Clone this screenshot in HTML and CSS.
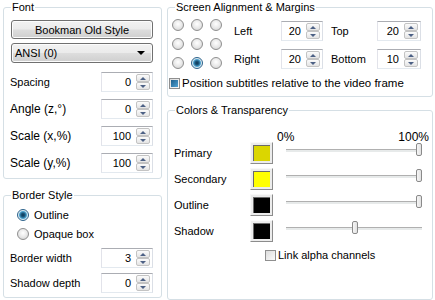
FILE: index.html
```html
<!DOCTYPE html>
<html lang="en">
<head>
    <meta charset="UTF-8">
    <title>Subtitle Style</title>
    <link rel="stylesheet" href="styles.css">
</head>
<body>
    <div class="dialog">
        <div class="col col-left">
            <fieldset class="group group-font">
                <legend>Font</legend>
                <div class="group-body">
                    <button class="btn-face" type="button">Bookman Old Style</button>
                    <div class="combo"><span>ANSI (0)</span><span class="combo-arrow"></span></div>
                    <div class="field-list">
                        <div class="field-row">
                            <span class="field-label">Spacing</span>
                            <div class="spin spin-wide"><span class="spin-value">0</span><span class="spin-btns"><span class="spin-up"></span><span class="spin-down"></span></span></div>
                        </div>
                        <div class="field-row">
                            <span class="field-label label-wide">Angle (z,°)</span>
                            <div class="spin spin-wide"><span class="spin-value">0</span><span class="spin-btns"><span class="spin-up"></span><span class="spin-down"></span></span></div>
                        </div>
                        <div class="field-row">
                            <span class="field-label label-wide">Scale (x,%)</span>
                            <div class="spin spin-wide"><span class="spin-value">100</span><span class="spin-btns"><span class="spin-up"></span><span class="spin-down"></span></span></div>
                        </div>
                        <div class="field-row">
                            <span class="field-label label-wide">Scale (y,%)</span>
                            <div class="spin spin-wide"><span class="spin-value">100</span><span class="spin-btns"><span class="spin-up"></span><span class="spin-down"></span></span></div>
                        </div>
                    </div>
                </div>
            </fieldset>

            <fieldset class="group group-border">
                <legend>Border Style</legend>
                <div class="group-body">
                    <div class="radio-row"><span class="radio checked"></span>Outline</div>
                    <div class="radio-row"><span class="radio"></span>Opaque box</div>
                    <div class="field-list field-list-tight">
                        <div class="field-row">
                            <span class="field-label">Border width</span>
                            <div class="spin spin-wide"><span class="spin-value">3</span><span class="spin-btns"><span class="spin-up"></span><span class="spin-down"></span></span></div>
                        </div>
                        <div class="field-row">
                            <span class="field-label">Shadow depth</span>
                            <div class="spin spin-wide"><span class="spin-value">0</span><span class="spin-btns"><span class="spin-up"></span><span class="spin-down"></span></span></div>
                        </div>
                    </div>
                </div>
            </fieldset>
        </div>

        <div class="col col-right">
            <fieldset class="group group-align">
                <legend>Screen Alignment &amp; Margins</legend>
                <div class="group-body">
                    <div class="align-top">
                        <div class="align-grid">
                            <span class="radio"></span><span class="radio"></span><span class="radio"></span>
                            <span class="radio"></span><span class="radio"></span><span class="radio"></span>
                            <span class="radio"></span><span class="radio checked"></span><span class="radio"></span>
                        </div>
                        <div class="margin-grid">
                            <span class="field-label">Left</span>
                            <div class="spin spin-small"><span class="spin-value">20</span><span class="spin-btns"><span class="spin-up"></span><span class="spin-down"></span></span></div>
                            <span class="field-label">Top</span>
                            <div class="spin spin-medium"><span class="spin-value">20</span><span class="spin-btns"><span class="spin-up"></span><span class="spin-down"></span></span></div>
                            <span class="field-label">Right</span>
                            <div class="spin spin-small"><span class="spin-value">20</span><span class="spin-btns"><span class="spin-up"></span><span class="spin-down"></span></span></div>
                            <span class="field-label">Bottom</span>
                            <div class="spin spin-medium"><span class="spin-value">10</span><span class="spin-btns"><span class="spin-up"></span><span class="spin-down"></span></span></div>
                        </div>
                    </div>
                    <div class="check-row check-relative"><span class="checkbox checked"></span>Position subtitles relative to the video frame</div>
                </div>
            </fieldset>

            <fieldset class="group group-colors">
                <legend>Colors &amp; Transparency</legend>
                <div class="group-body">
                    <div class="scale-head"><span>0%</span><span>100%</span></div>
                    <div class="color-list">
                        <div class="color-row">
                            <span class="field-label">Primary</span>
                            <span class="swatch"><span class="swatch-fill fill-primary"></span></span>
                            <div class="slider"><span class="slider-thumb" style="left: 100%"></span></div>
                        </div>
                        <div class="color-row">
                            <span class="field-label">Secondary</span>
                            <span class="swatch"><span class="swatch-fill fill-secondary"></span></span>
                            <div class="slider"><span class="slider-thumb" style="left: 100%"></span></div>
                        </div>
                        <div class="color-row">
                            <span class="field-label">Outline</span>
                            <span class="swatch"><span class="swatch-fill fill-black"></span></span>
                            <div class="slider"><span class="slider-thumb" style="left: 100%"></span></div>
                        </div>
                        <div class="color-row">
                            <span class="field-label">Shadow</span>
                            <span class="swatch"><span class="swatch-fill fill-black"></span></span>
                            <div class="slider"><span class="slider-thumb" style="left: 53%"></span></div>
                        </div>
                    </div>
                    <div class="check-row check-link"><span class="checkbox"></span>Link alpha channels</div>
                </div>
            </fieldset>
        </div>
    </div>
</body>
</html>
```

FILE: styles.css
```css
body {
    margin: 0;
    background-color: #fff;
    font-family: "Liberation Sans", Arial, sans-serif;
    font-size: 11px;
    color: #000;
}
.dialog {
    display: flex;
    gap: 5px;
    width: 435px;
    height: 300px;
    padding-left: 3px;
    box-sizing: border-box;
}
.col {
    display: flex;
    flex-direction: column;
}
.col-left {
    width: 159px;
}
.col-right {
    width: 266px;
}

/* group boxes */
.group {
    margin: 0;
    padding: 0;
    min-width: 0;
    border: 1px solid #d5dfe5;
    border-radius: 3px;
}
.group legend {
    margin-left: 7px;
    padding: 0 1px;
    line-height: 14px;
}
.group-font .group-body {
    padding: 6px 8px 5px 6px;
}
.group-border {
    margin-top: 9px;
}
.group-border .group-body {
    padding: 3px 8px 4px 6px;
}
.group-align .group-body {
    padding: 0 0 7px 1px;
}
.group-colors {
    margin-top: 6px;
    flex: 1;
}
.group-colors .group-body {
    padding: 13px 3px 0 6px;
}

/* buttons and combo */
.btn-face,
.combo {
    display: flex;
    align-items: center;
    width: 142px;
    margin-left: 1px;
    border: 1px solid #707070;
    border-radius: 3px;
    background: linear-gradient(#f2f2f2 0%, #ebebeb 48%, #dddddd 52%, #cfcfcf 100%);
    box-shadow: inset 0 0 0 1px #fcfcfc;
    font-family: inherit;
    font-size: 11px;
    color: #000;
    box-sizing: border-box;
}
.btn-face {
    justify-content: center;
    height: 19px;
    padding: 0;
}
.combo {
    justify-content: space-between;
    height: 20px;
    margin-top: 4px;
    padding: 0 7px 0 3px;
}
.combo-arrow {
    width: 0;
    height: 0;
    border-left: 4px solid transparent;
    border-right: 4px solid transparent;
    border-top: 4px solid #000;
}

/* labelled spin fields */
.field-list {
    display: flex;
    flex-direction: column;
    gap: 7px;
    margin-top: 9px;
}
.field-list-tight {
    gap: 5px;
    margin-top: 5px;
}
.field-row {
    display: flex;
    align-items: center;
    justify-content: space-between;
    height: 20px;
}
.field-label {
    white-space: nowrap;
}
.label-wide {
    font-size: 12px;
}
.spin {
    display: flex;
    align-items: center;
    height: 20px;
    padding: 1px 2px 1px 1px;
    border: 1px solid #abadb3;
    border-color: #abadb3 #dbdfe6 #e3e9ef #e2e3ea;
    background-color: #fff;
    box-sizing: border-box;
}
.spin-wide {
    width: 52px;
}
.spin-small {
    width: 42px;
}
.spin-medium {
    width: 44px;
}
.spin-value {
    flex: 1;
    text-align: right;
    padding-right: 5px;
}
.spin-btns {
    display: flex;
    flex-direction: column;
    gap: 0;
    width: 14px;
    height: 16px;
}
.spin-up,
.spin-down {
    flex: 1;
    display: flex;
    align-items: center;
    justify-content: center;
    border: 1px solid #c3c3c3;
    border-radius: 2px;
    background: linear-gradient(#fbfbfb, #e4e4e4);
}
.spin-up::after,
.spin-down::after {
    content: "";
    border-left: 3px solid transparent;
    border-right: 3px solid transparent;
}
.spin-up::after {
    border-bottom: 3px solid #4d6185;
}
.spin-down::after {
    border-top: 3px solid #4d6185;
}

/* radios and checkboxes */
.radio {
    display: inline-block;
    width: 12px;
    height: 12px;
    border: 1px solid #8f8f8f;
    border-radius: 50%;
    background: radial-gradient(circle at 50% 40%, #ffffff 0%, #e9e9e9 50%, #cdcdcd 100%);
    box-sizing: border-box;
}
.radio.checked {
    border-color: #2c628b;
    background: radial-gradient(circle, #0e3552 0, #1d5a80 2px, #4ea3cf 3.5px, #dbe9f1 4.5px, #f4f4f4 6px);
}
.radio-row {
    display: flex;
    align-items: center;
    gap: 5px;
    height: 19px;
    padding-left: 7px;
}
.checkbox {
    display: inline-flex;
    align-items: center;
    justify-content: center;
    width: 11px;
    height: 11px;
    border: 1px solid #8f8f8f;
    background: linear-gradient(135deg, #dcdcdc, #fbfbfb);
    box-sizing: border-box;
}
.checkbox.checked::after {
    content: "";
    width: 7px;
    height: 7px;
    background: linear-gradient(135deg, #1e5f8c, #4fa2d3);
}
.check-row {
    display: flex;
    align-items: center;
    gap: 2px;
}

/* alignment group */
.align-top {
    display: flex;
    align-items: flex-start;
}
.align-grid {
    display: grid;
    grid-template-columns: repeat(3, 12px);
    gap: 7px;
    margin: 5px 0 0 3px;
}
.margin-grid {
    display: grid;
    grid-template-columns: 47px 50px 46px 44px;
    row-gap: 8px;
    align-items: center;
    margin: 7px 0 0 12px;
}
.check-relative {
    margin: 8px 0 0 0;
    height: 12px;
    font-size: 11.5px;
}

/* colours group */
.scale-head {
    display: flex;
    justify-content: space-between;
    margin-left: 103px;
    line-height: 14px;
    font-size: 12px;
}
.color-list {
    display: flex;
    flex-direction: column;
    gap: 4px;
    margin-top: -2px;
}
.color-row {
    display: grid;
    grid-template-columns: 76px 36px 136px;
    align-items: center;
    height: 22px;
}
.swatch {
    display: block;
    width: 23px;
    height: 22px;
    padding: 2px;
    border: 1px solid #b8b8b8;
    border-color: #f8f8f8 #8c8c8c #8c8c8c #f8f8f8;
    background-color: #ececec;
    box-sizing: border-box;
}
.swatch-fill {
    display: block;
    width: 100%;
    height: 100%;
    box-shadow: inset 1px 1px 0 #6b6b6b;
}
.fill-primary {
    background-color: #dbd600;
}
.fill-secondary {
    background-color: #ffff00;
}
.fill-black {
    background-color: #000;
}
.slider {
    position: relative;
    height: 2px;
    margin-top: -4px;
    border-top: 1px solid #b0b0b0;
    border-bottom: 1px solid #ffffff;
    background-color: #e7eaea;
}
.slider-thumb {
    position: absolute;
    top: -7px;
    width: 6px;
    height: 13px;
    margin-left: -6px;
    border: 1px solid #8a8a8a;
    border-radius: 2px;
    background: linear-gradient(90deg, #f6f6f6, #e2e2e2);
    box-sizing: border-box;
}
.check-link {
    margin: 7px 0 0 91px;
}
```
